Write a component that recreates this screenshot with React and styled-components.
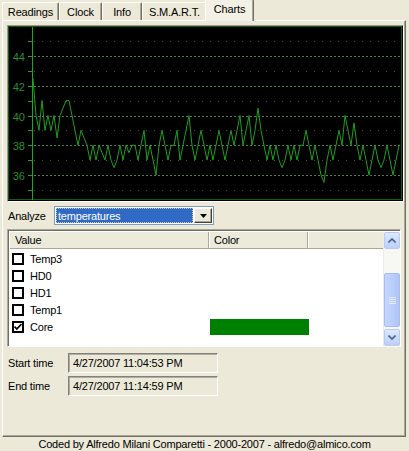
import React from "react";
import styled, { createGlobalStyle } from "styled-components";

const Global = createGlobalStyle`
  html, body { margin: 0; padding: 0; background: #ece9d8; }
  body { font-family: "Liberation Sans", Arial, sans-serif; font-size: 11px; color: #000; }
`;

const Window = styled.div`
  width: 409px;
  height: 451px;
  display: flex;
  flex-direction: column;
  background: #ece9d8;
  overflow: hidden;
`;

const TabStrip = styled.div`
  height: 20px;
  display: flex;
  align-items: flex-end;
  padding-left: 2px;
  position: relative;
  z-index: 1;
`;

const Tab = styled.div`
  box-sizing: border-box;
  width: ${(p) => p.$w}px;
  height: ${(p) => (p.$active ? 22 : 18)}px;
  margin: ${(p) => (p.$active ? "0 -2px -1px -2px" : "0")};
  display: flex;
  align-items: center;
  justify-content: center;
  padding-bottom: ${(p) => (p.$active ? 3 : 0)}px;
  background: ${(p) => (p.$active ? "#f3f1e6" : "#ece9d8")};
  border-top: 1px solid #fff;
  border-left: 1px solid #fff;
  border-right: 1px solid #716f64;
  box-shadow: inset -1px 0 0 #aca899;
  border-radius: 2px 2px 0 0;
  letter-spacing: -0.15px;
  position: relative;
  z-index: ${(p) => (p.$active ? 2 : 1)};
`;

const Panel = styled.div`
  box-sizing: border-box;
  height: 417px;
  margin: 0 3px 0 2px;
  border-top: 1px solid #fff;
  border-left: 1px solid #fff;
  border-right: 1px solid #716f64;
  border-bottom: 1px solid #716f64;
  box-shadow: inset -1px -1px 0 #aca899;
  padding: 4px 2px 0 4px;
  display: flex;
  flex-direction: column;
`;

const ChartFrame = styled.div`
  box-sizing: border-box;
  width: 397px;
  height: 177px;
  border-top: 1px solid #9d9a8c;
  border-left: 1px solid #9d9a8c;
  border-right: 1px solid #fff;
  border-bottom: 1px solid #fff;
  background: #000;
  line-height: 0;
`;

const AnalyzeRow = styled.div`
  display: flex;
  align-items: center;
  margin-top: 4px;
  height: 19px;
`;

const Label = styled.span`
  width: ${(p) => p.$w || 46}px;
  padding-left: 1px;
  letter-spacing: -0.2px;
`;

const Combo = styled.div`
  box-sizing: border-box;
  width: 160px;
  height: 19px;
  border: 1px solid #7f9db9;
  background: #fff;
  display: flex;
  align-items: stretch;
  padding: 1px;
`;

const ComboText = styled.div`
  flex: 1;
  background: #316ac5;
  color: #fff;
  outline: 1px dotted #cfc9a5;
  outline-offset: -1px;
  display: flex;
  align-items: center;
  padding-left: 2px;
  letter-spacing: -0.2px;
`;

const ComboButton = styled.div`
  box-sizing: border-box;
  width: 18px;
  margin-left: 1px;
  background: #ece9d8;
  border-top: 1px solid #fff;
  border-left: 1px solid #fff;
  border-right: 1px solid #404040;
  border-bottom: 1px solid #404040;
  box-shadow: inset -1px -1px 0 #aca899;
  display: flex;
  align-items: center;
  justify-content: center;
`;

const List = styled.div`
  box-sizing: border-box;
  margin-top: 4px;
  width: 394px;
  height: 118px;
  border-top: 1px solid #aca899;
  border-left: 1px solid #aca899;
  border-right: 1px solid #fff;
  border-bottom: 1px solid #fff;
  box-shadow: inset 1px 1px 0 #716f64;
  padding: 2px 0 0 2px;
  display: flex;
  background: #fff;
`;

const ListBody = styled.div`
  flex: 1;
  display: flex;
  flex-direction: column;
`;

const HeaderRow = styled.div`
  display: flex;
  height: 17px;
  background: #ebeadb;
  border-bottom: 1px solid #aca899;
  box-sizing: border-box;
`;

const HeaderCell = styled.div`
  box-sizing: border-box;
  width: ${(p) => p.$w}px;
  flex: ${(p) => (p.$fill ? 1 : "none")};
  padding-left: 5px;
  display: flex;
  align-items: center;
  border-right: ${(p) => (p.$fill ? "none" : "1px solid #aca899")};
  box-shadow: ${(p) => (p.$fill ? "none" : "1px 0 0 #fff")};
  letter-spacing: -0.2px;
`;

const Rows = styled.div`
  display: flex;
  flex-direction: column;
  padding-top: 1px;
`;

const Row = styled.div`
  display: flex;
  height: 17px;
  align-items: center;
`;

const NameCell = styled.div`
  width: 198px;
  display: flex;
  align-items: center;
  padding-left: 2px;
  gap: 6px;
  letter-spacing: -0.2px;
`;

const Check = styled.div`
  box-sizing: border-box;
  width: 12px;
  height: 12px;
  border: 2px solid #000;
  background: #fff;
  display: flex;
  align-items: center;
  justify-content: center;
`;

const ColorCell = styled.div`
  width: 99px;
  height: 16px;
  background: ${(p) => p.$color || "transparent"};
`;

const ScrollBar = styled.div`
  width: 17px;
  display: flex;
  flex-direction: column;
  background: #f7f7f3;
  border-left: 1px solid #eeede5;
  box-sizing: border-box;
`;

const ScrollBtn = styled.div`
  box-sizing: border-box;
  height: 17px;
  margin: 0 0 0 0;
  border: 1px solid #b7cbf5;
  border-radius: 2px;
  background: linear-gradient(#dde8fe, #bccffb);
  display: flex;
  align-items: center;
  justify-content: center;
`;

const Thumb = styled.div`
  box-sizing: border-box;
  height: 54px;
  margin-top: ${(p) => p.$top}px;
  margin-bottom: auto;
  border: 1px solid #a7bdf2;
  border-radius: 2px;
  background: linear-gradient(90deg, #c6d6fd, #b8cdfb 60%, #aec3f7);
  display: flex;
  align-items: center;
  justify-content: center;
`;

const TimeRow = styled.div`
  display: flex;
  align-items: center;
  margin-top: ${(p) => p.$mt}px;
`;

const TimeField = styled.div`
  box-sizing: border-box;
  width: 150px;
  height: 20px;
  border-top: 1px solid #808080;
  border-left: 1px solid #808080;
  border-right: 1px solid #fff;
  border-bottom: 1px solid #fff;
  box-shadow: inset 1px 1px 0 #b0ad9e;
  padding-left: 4px;
  display: flex;
  align-items: center;
  letter-spacing: -0.2px;
  margin-left: 14px;
`;

const Footer = styled.div`
  flex: 1;
  display: flex;
  align-items: center;
  justify-content: center;
  padding-bottom: 1px;
  letter-spacing: -0.2px;
`;

const vy = (v) => 56 + (44 - v) * 14.875;

const data = [
  42.5, 40, 39, 41, 39, 40, 39, 40, 38.5, 40,
  40.5, 41, 41, 40, 39, 38,
  39, 38.5, 38, 37, 38, 37, 38, 37.5,
  37, 38, 37, 36.5, 37, 38, 37, 38, 37.5, 38,
  38, 37, 38, 39, 37, 38, 37, 36, 38, 39, 38, 37, 38,
  38, 39, 37, 38, 39, 40, 38, 37, 38, 39, 38, 37, 38,
  37, 38, 39, 38, 37, 38, 39, 38, 39, 40, 38, 39, 40, 38, 39, 40.5, 39,
  38, 37, 38, 37, 38, 37, 36.5, 37, 38, 37, 38, 37, 38,
  38, 39, 38, 37, 38, 37, 36, 35.5, 37, 38, 37,
  38, 39, 38, 40, 39, 38, 39.5, 38, 37, 38,
  37, 36, 37, 38, 37, 36.5, 37, 38, 37, 36, 37, 38, 38,
];

function Chart() {
  const pts = data
    .map((v, i) => [Math.min(33 + i * 3, 400), vy(v)])
    .map(([x, y]) => `${x},${y.toFixed(1)}`)
    .join(" ");
  const levels = [45, 44, 43, 42, 41, 40, 39, 38, 37, 36, 35];
  return (
    <svg width="395" height="175" viewBox="8 26 395 175">
      <rect x="8" y="26" width="395" height="175" fill="#000" />
      <rect x="8.5" y="26.5" width="393" height="173" fill="none" stroke="#0d5a12" />
      {levels.map((v) => {
        const y = Math.round(vy(v)) + 0.5;
        const major = v % 2 === 0;
        return (
          <g key={v}>
            <line
              x1="34"
              x2="400"
              y1={y}
              y2={y}
              stroke={major ? "#4d7f4d" : "#4a4a4a"}
              strokeDasharray={major ? "2 2" : "1 7"}
            />
            <line x1="28" x2="32" y1={y} y2={y} stroke="#2c9a2c" />
            {major && (
              <text
                x="25"
                y={y + 4}
                fill="#2e8e2e"
                fontSize="11"
                textAnchor="end"
                fontFamily="Liberation Sans, Arial, sans-serif"
              >
                {v}
              </text>
            )}
          </g>
        );
      })}
      <line x1="32.5" x2="32.5" y1="27" y2="200" stroke="#23a523" />
      <polyline points={pts} fill="none" stroke="#1f9f1f" strokeWidth="1" />
    </svg>
  );
}

const rows = [
  { name: "Temp3" },
  { name: "HD0" },
  { name: "HD1" },
  { name: "Temp1" },
  { name: "Core", checked: true, color: "#008000" },
];

export default function App() {
  return (
    <Window>
      <Global />
      <TabStrip>
        <Tab $w={57}>Readings</Tab>
        <Tab $w={43}>Clock</Tab>
        <Tab $w={40}>Info</Tab>
        <Tab $w={65}>S.M.A.R.T.</Tab>
        <Tab $w={49} $active>Charts</Tab>
      </TabStrip>
      <Panel>
        <ChartFrame>
          <Chart />
        </ChartFrame>
        <AnalyzeRow>
          <Label>Analyze</Label>
          <Combo>
            <ComboText>temperatures</ComboText>
            <ComboButton>
              <svg width="7" height="4" viewBox="0 0 7 4">
                <path d="M0 0h7L3.5 4z" fill="#000" />
              </svg>
            </ComboButton>
          </Combo>
        </AnalyzeRow>
        <List>
          <ListBody>
            <HeaderRow>
              <HeaderCell $w={199}>Value</HeaderCell>
              <HeaderCell $w={99}>Color</HeaderCell>
              <HeaderCell $fill />
            </HeaderRow>
            <Rows>
              {rows.map((r) => (
                <Row key={r.name}>
                  <NameCell>
                    <Check>
                      {r.checked && (
                        <svg width="8" height="8" viewBox="0 0 8 8">
                          <path d="M0.5 3.5l2.3 2.5L7.5 1" fill="none" stroke="#000" strokeWidth="1.8" />
                        </svg>
                      )}
                    </Check>
                    {r.name}
                  </NameCell>
                  <ColorCell $color={r.color} />
                </Row>
              ))}
            </Rows>
          </ListBody>
          <ScrollBar>
            <ScrollBtn>
              <svg width="8" height="5" viewBox="0 0 8 5">
                <path d="M0.5 4.5L4 1l3.5 3.5" fill="none" stroke="#4d6185" strokeWidth="1.6" />
              </svg>
            </ScrollBtn>
            <Thumb $top={24}>
              <svg width="7" height="7" viewBox="0 0 7 7">
                <path d="M0 0.5h7M0 2.5h7M0 4.5h7M0 6.5h7" stroke="#e4ebfe" strokeWidth="1" />
              </svg>
            </Thumb>
            <ScrollBtn>
              <svg width="8" height="5" viewBox="0 0 8 5">
                <path d="M0.5 0.5L4 4l3.5-3.5" fill="none" stroke="#4d6185" strokeWidth="1.6" />
              </svg>
            </ScrollBtn>
          </ScrollBar>
        </List>
        <TimeRow $mt={6}>
          <Label $w={46}>Start time</Label>
          <TimeField>4/27/2007 11:04:53 PM</TimeField>
        </TimeRow>
        <TimeRow $mt={3}>
          <Label $w={46}>End time</Label>
          <TimeField>4/27/2007 11:14:59 PM</TimeField>
        </TimeRow>
      </Panel>
      <Footer>Coded by Alfredo Milani Comparetti - 2000-2007 - alfredo@almico.com</Footer>
    </Window>
  );
}
